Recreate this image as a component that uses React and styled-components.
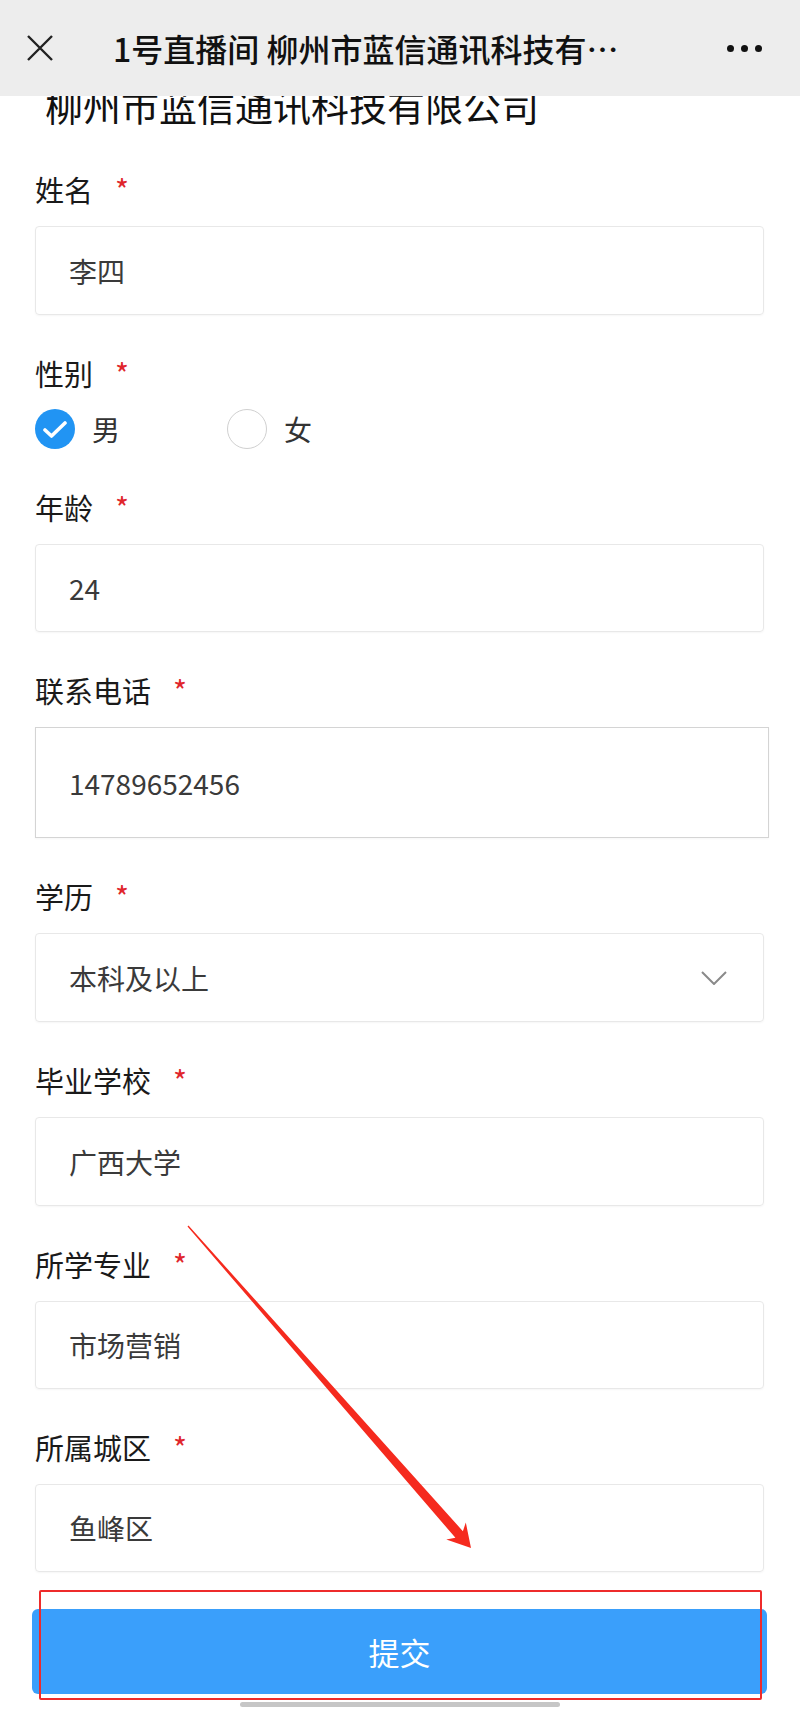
import styled, { createGlobalStyle } from 'styled-components';

const GlobalStyle = createGlobalStyle`
  html, body {
    margin: 0;
    padding: 0;
    background: #ffffff;
  }

  body {
    font-family: 'Noto Sans CJK SC', 'Noto Sans', sans-serif;
    color: #1a1a1a;
  }
`;

const Page = styled.div`
  position: relative;
  width: 800px;
  min-height: 1715px;
  overflow: hidden;
  padding-top: 86px;
  box-sizing: border-box;
`;

const Header = styled.header`
  position: absolute;
  top: 0;
  left: 0;
  right: 0;
  z-index: 2;
  height: 96px;
  display: flex;
  align-items: center;
  padding: 0 38px 0 27px;
  background: #ededed;
`;

const Title = styled.h1`
  margin: 0 0 0 60px;
  font-size: 32px;
  font-weight: 500;
  line-height: 40px;
  color: #111111;
  white-space: nowrap;
`;

const MoreButton = styled.div`
  margin-left: auto;
  display: flex;
  gap: 7px;

  span {
    width: 7px;
    height: 7px;
    border-radius: 50%;
    background: #111111;
  }
`;

const Company = styled.div`
  margin-left: 45px;
  font-size: 38px;
  line-height: 38px;
  color: #111111;
`;

const Form = styled.form`
  display: flex;
  flex-direction: column;
  padding: 7px 0 0 35px;
`;

const Field = styled.div`
  display: flex;
  flex-direction: column;
  margin-top: 38px;
`;

const Label = styled.label`
  display: flex;
  align-items: center;
  height: 40px;
  font-size: 29px;
  color: #1a1a1a;
`;

const Required = styled.span`
  margin-left: 22px;
  font-size: 30px;
  line-height: 40px;
  color: #e0262c;
`;

const Box = styled.div`
  display: flex;
  align-items: center;
  box-sizing: border-box;
  width: ${(p) => (p.$wide ? '734px' : '729px')};
  height: ${(p) => p.$height || 89}px;
  margin-top: 17px;
  padding: 0 36px 0 33px;
  border: ${(p) => (p.$focus ? '1.5px solid #d4d4d4' : '1px solid #e8e8e8')};
  border-radius: ${(p) => (p.$focus ? '0' : '4px')};
  box-shadow: 0 1px 2px rgba(0, 0, 0, 0.04);
  font-size: 28px;
  color: #3a3a3a;
`;

const Chevron = styled.svg`
  margin-left: auto;
`;

const RadioGroup = styled.div`
  display: flex;
  margin-top: 16px;
  height: 40px;
`;

const Option = styled.div`
  display: flex;
  align-items: center;
  gap: 17px;
  width: 192px;
  font-size: 28px;
  color: #333333;
`;

const Circle = styled.span`
  display: flex;
  align-items: center;
  justify-content: center;
  box-sizing: border-box;
  width: 40px;
  height: 40px;
  border-radius: 50%;
  background: ${(p) => (p.$checked ? '#2194f3' : '#ffffff')};
  border: ${(p) => (p.$checked ? 'none' : '1.5px solid #d0d0d0')};
`;

const Submit = styled.button`
  width: 735px;
  height: 85px;
  margin: 37px 0 0 -3px;
  border: none;
  border-radius: 6px;
  background: #3a9ffb;
  color: #ffffff;
  font-family: inherit;
  font-size: 31px;
`;

const HomeBar = styled.div`
  width: 320px;
  height: 5px;
  margin: 8px auto 0;
  border-radius: 3px;
  background: #c6c6c6;
`;

const Highlight = styled.div`
  position: absolute;
  left: 39px;
  top: 1590px;
  width: 723px;
  height: 110px;
  box-sizing: border-box;
  border: 2px solid #ee2b2b;
  border-radius: 2px;
  pointer-events: none;
`;

const Annotation = styled.svg`
  position: absolute;
  left: 0;
  top: 0;
  pointer-events: none;
`;

const fields = [
  { label: '姓名', value: '李四' },
  { label: '性别', radio: true },
  { label: '年龄', value: '24', height: 88 },
  { label: '联系电话', value: '14789652456', height: 111, wide: true, focus: true },
  { label: '学历', value: '本科及以上', select: true },
  { label: '毕业学校', value: '广西大学' },
  { label: '所学专业', value: '市场营销', height: 88 },
  { label: '所属城区', value: '鱼峰区', height: 88 },
];

export default function App() {
  return (
    <>
      <GlobalStyle />
      <Page>
        <Header>
          <svg width="26" height="26" viewBox="0 0 26 26">
            <path d="M1 1 L25 25 M25 1 L1 25" stroke="#222" strokeWidth="2.4" fill="none" />
          </svg>
          <Title>1号直播间 柳州市蓝信通讯科技有…</Title>
          <MoreButton>
            <span />
            <span />
            <span />
          </MoreButton>
        </Header>

        <Company>柳州市蓝信通讯科技有限公司</Company>

        <Form>
          {fields.map((f) => (
            <Field key={f.label}>
              <Label>
                {f.label}
                <Required>*</Required>
              </Label>
              {f.radio ? (
                <RadioGroup>
                  <Option>
                    <Circle $checked>
                      <svg width="24" height="19" viewBox="0 0 24 19">
                        <path d="M2 10 L8.5 16 L22 3" stroke="#fff" strokeWidth="3.6" fill="none" strokeLinecap="round" strokeLinejoin="round" />
                      </svg>
                    </Circle>
                    男
                  </Option>
                  <Option>
                    <Circle />
                    女
                  </Option>
                </RadioGroup>
              ) : (
                <Box $height={f.height} $wide={f.wide} $focus={f.focus}>
                  {f.value}
                  {f.select && (
                    <Chevron width="26" height="14" viewBox="0 0 26 14">
                      <polyline points="1,1 13,13 25,1" stroke="#8a8a8a" strokeWidth="2" fill="none" />
                    </Chevron>
                  )}
                </Box>
              )}
            </Field>
          ))}
          <Submit type="button">提交</Submit>
        </Form>
        <HomeBar />

        <Highlight />
        <Annotation width="800" height="1715" viewBox="0 0 800 1715">
          <polygon
            points="187.5,1226.5 455.4,1537.8 446.3,1539.6 471,1548 465.8,1522.5 462.9,1531.2 188.5,1225.5"
            fill="#f52a1e"
          />
        </Annotation>
      </Page>
    </>
  );
}
